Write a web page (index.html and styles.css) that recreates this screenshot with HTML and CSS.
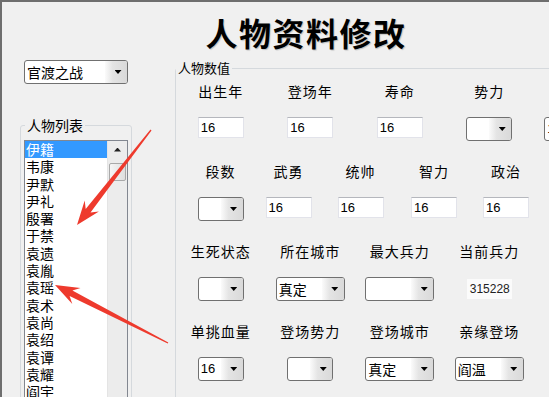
FILE: index.html
```html
<!DOCTYPE html>
<html lang="zh-CN">
<head>
  <meta charset="UTF-8">
  <title>人物资料修改</title>
  <link rel="stylesheet" href="styles.css">
</head>
<body>

  <div class="window">
    <h1 class="title">人物资料修改</h1>

    <div class="main">
      <aside class="side">
        <div class="combo combo-scene">
          <span class="combo-text">官渡之战</span>
          <span class="combo-btn"><i class="drop"></i></span>
        </div>

        <fieldset class="group group-list">
          <legend>人物列表</legend>
          <div class="listbox">
            <ul class="list-items">
              <li class="selected">伊籍</li>
              <li>韦康</li>
              <li>尹默</li>
              <li>尹礼</li>
              <li>殷署</li>
              <li>于禁</li>
              <li>袁遗</li>
              <li>袁胤</li>
              <li>袁瑶</li>
              <li>袁术</li>
              <li>袁尚</li>
              <li>袁绍</li>
              <li>袁谭</li>
              <li>袁耀</li>
              <li>阎宇</li>
            </ul>
            <div class="scrollbar">
              <span class="scroll-up"><i class="up"></i></span>
              <span class="scroll-thumb"></span>
            </div>
          </div>
        </fieldset>
      </aside>

      <fieldset class="group group-stats">
        <legend>人物数值</legend>

        <div class="stat-row">
          <div class="field"><span class="label">出生年</span><span class="text-box">16</span></div>
          <div class="field"><span class="label">登场年</span><span class="text-box">16</span></div>
          <div class="field"><span class="label">寿命</span><span class="text-box">16</span></div>
          <div class="field"><span class="label">势力</span>
            <div class="combo"><span class="combo-text"></span><span class="combo-btn"><i class="drop"></i></span></div>
          </div>
          <div class="field"><span class="label"></span>
            <div class="combo wide"><span class="combo-text">16</span><span class="combo-btn"><i class="drop"></i></span></div>
          </div>
        </div>

        <div class="stat-row row-five">
          <div class="field"><span class="label">段数</span>
            <div class="combo"><span class="combo-text"></span><span class="combo-btn"><i class="drop"></i></span></div>
          </div>
          <div class="field"><span class="label">武勇</span><span class="text-box">16</span></div>
          <div class="field"><span class="label">统帅</span><span class="text-box">16</span></div>
          <div class="field"><span class="label">智力</span><span class="text-box">16</span></div>
          <div class="field"><span class="label">政治</span><span class="text-box">16</span></div>
        </div>

        <div class="stat-row">
          <div class="field"><span class="label">生死状态</span>
            <div class="combo"><span class="combo-text"></span><span class="combo-btn"><i class="drop"></i></span></div>
          </div>
          <div class="field"><span class="label">所在城市</span>
            <div class="combo wide"><span class="combo-text cn">真定</span><span class="combo-btn"><i class="drop"></i></span></div>
          </div>
          <div class="field"><span class="label">最大兵力</span>
            <div class="combo wide"><span class="combo-text"></span><span class="combo-btn"><i class="drop"></i></span></div>
          </div>
          <div class="field"><span class="label">当前兵力</span><span class="read-box">315228</span></div>
        </div>

        <div class="stat-row">
          <div class="field"><span class="label">单挑血量</span>
            <div class="combo"><span class="combo-text">16</span><span class="combo-btn"><i class="drop"></i></span></div>
          </div>
          <div class="field"><span class="label">登场势力</span>
            <div class="combo"><span class="combo-text"></span><span class="combo-btn"><i class="drop"></i></span></div>
          </div>
          <div class="field"><span class="label">登场城市</span>
            <div class="combo wide"><span class="combo-text cn">真定</span><span class="combo-btn"><i class="drop"></i></span></div>
          </div>
          <div class="field"><span class="label">亲缘登场</span>
            <div class="combo wide"><span class="combo-text cn">阎温</span><span class="combo-btn"><i class="drop"></i></span></div>
          </div>
        </div>
      </fieldset>
    </div>
  </div>

  <!-- red annotation arrows drawn over the screenshot -->
  <svg class="arrows" width="549" height="397" viewBox="0 0 549 397">
    <polygon points="151.5,130.4 90.5,212.6 98.9,211.6 77,225 84.7,200.6 85.7,209 150.5,129.6" />
    <polygon points="168.3,342.5 72.4,290.5 80.5,288 55,285 72.3,304 69.6,295.9 167.7,343.5" />
  </svg>

</body>
</html>
```

FILE: styles.css
```css
body {
  margin: 0;
  position: relative;
  overflow: hidden;
  background-color: #f0f0f0;
  font-family: "Noto Sans CJK SC", sans-serif;
  color: #000;
}
.window {
  width: 608px;
  height: 395px;
  border-top: 2px solid #6e6e6e;
  border-left: 2px solid #6e6e6e;
  background-color: #f0f0f0;
  overflow: hidden;
}
.title {
  margin: 0;
  padding-top: 14px;
  font-size: 32px;
  line-height: 32px;
  font-weight: 700;
  letter-spacing: 1.5px;
  text-align: center;
  text-shadow: 1px 1px 1px rgba(0, 0, 0, 0.2);
}
.main {
  display: flex;
  align-items: flex-start;
}
.side {
  width: 173px;
  flex-shrink: 0;
  padding-top: 12px;
}

/* group boxes */
.group {
  margin: 0;
  border: 1px solid #d5d9dd;
  border-radius: 3px;
  min-width: 0;
}
.group legend {
  padding: 0 2px;
  line-height: 16px;
}
.group-list {
  width: 112px;
  box-sizing: border-box;
  margin: 33px 0 0 18px;
  padding: 7px 3px 0 3px;
}
.group-list legend {
  font-size: 14px;
  margin-left: 1px;
}
.group-stats {
  flex: 1;
  margin-top: 12px;
  padding: 5px 0 0 0;
  display: flex;
  flex-direction: column;
  gap: 20px;
  height: 340px;
}
.group-stats legend {
  font-size: 13px;
}

/* combo boxes */
.combo {
  box-sizing: border-box;
  display: flex;
  width: 46px;
  height: 24px;
  border: 1px solid #707070;
  border-radius: 3px;
  background-color: #fff;
  overflow: hidden;
}
.combo.wide {
  width: 69px;
}
.combo-scene {
  width: 104px;
  margin-left: 22px;
}
.combo-text {
  flex: 1;
  padding-left: 2px;
  font-family: "Liberation Sans", sans-serif;
  font-size: 13px;
  line-height: 22px;
  white-space: nowrap;
}
.combo-text.cn,
.combo-scene .combo-text {
  font-family: "Noto Sans CJK SC", sans-serif;
  font-size: 14px;
}
.combo-btn {
  width: 22px;
  box-sizing: border-box;
  padding-left: 4px;
  display: flex;
  align-items: center;
  justify-content: center;
  background: linear-gradient(to right, #fbfbfb, #e4e4e4 35%, #d9d9d9);
}
.drop {
  display: block;
  width: 7px;
  height: 4px;
  background-color: #000;
  clip-path: polygon(0 0, 100% 0, 50% 100%);
}

/* value rows */
.stat-row {
  display: grid;
  grid-template-columns: repeat(5, 89.5px);
  justify-items: center;
}
.stat-row.row-five {
  grid-template-columns: 89px 47px 97px 50px 94px;
}
.field {
  display: flex;
  flex-direction: column;
  align-items: center;
}
.label {
  height: 20px;
  line-height: 20px;
  font-size: 14px;
  letter-spacing: 1px;
  white-space: nowrap;
}
.field .label + * {
  margin-top: 16px;
}
.text-box {
  box-sizing: border-box;
  width: 46px;
  height: 21px;
  padding-left: 2px;
  background-color: #fff;
  border: 1px solid #e2e3ea;
  border-top-color: #b5b7bd;
  font-family: "Liberation Sans", sans-serif;
  font-size: 13px;
  line-height: 19px;
}
.read-box {
  box-sizing: border-box;
  width: 45px;
  height: 20px;
  padding-left: 3px;
  margin-top: 18px !important;
  background-color: #fbfbfb;
  font-family: "Liberation Sans", sans-serif;
  font-size: 12px;
  line-height: 20px;
  color: #222;
}

/* person list */
.listbox {
  display: flex;
  width: 104px;
  height: 290px;
  box-sizing: border-box;
  border: 1px solid #828790;
  background-color: #fff;
}
.list-items {
  flex: 1;
  margin: 0;
  padding: 0;
  list-style: none;
  font-size: 14px;
  line-height: 17.3px;
}
.list-items li {
  padding-left: 1px;
  white-space: nowrap;
}
.list-items li.selected {
  background-color: #3399ff;
  color: #fff;
}
.scrollbar {
  width: 19px;
  display: flex;
  flex-direction: column;
  align-items: center;
  background-color: #ececec;
  border-left: 1px solid #e4e4e4;
}
.scroll-up {
  height: 17px;
  width: 100%;
  display: flex;
  align-items: center;
  justify-content: center;
}
.up {
  display: block;
  width: 7px;
  height: 4px;
  background-color: #222;
  clip-path: polygon(50% 0, 100% 100%, 0 100%);
}
.scroll-thumb {
  width: 15px;
  height: 16px;
  margin-top: 5px;
  border: 1px solid #a9a9a9;
  border-radius: 2px;
  background: linear-gradient(to right, #f6f6f6, #dedede);
}

.arrows {
  position: absolute;
  top: 0;
  left: 0;
  pointer-events: none;
}
.arrows polygon {
  fill: #ee3a2d;
}
```
